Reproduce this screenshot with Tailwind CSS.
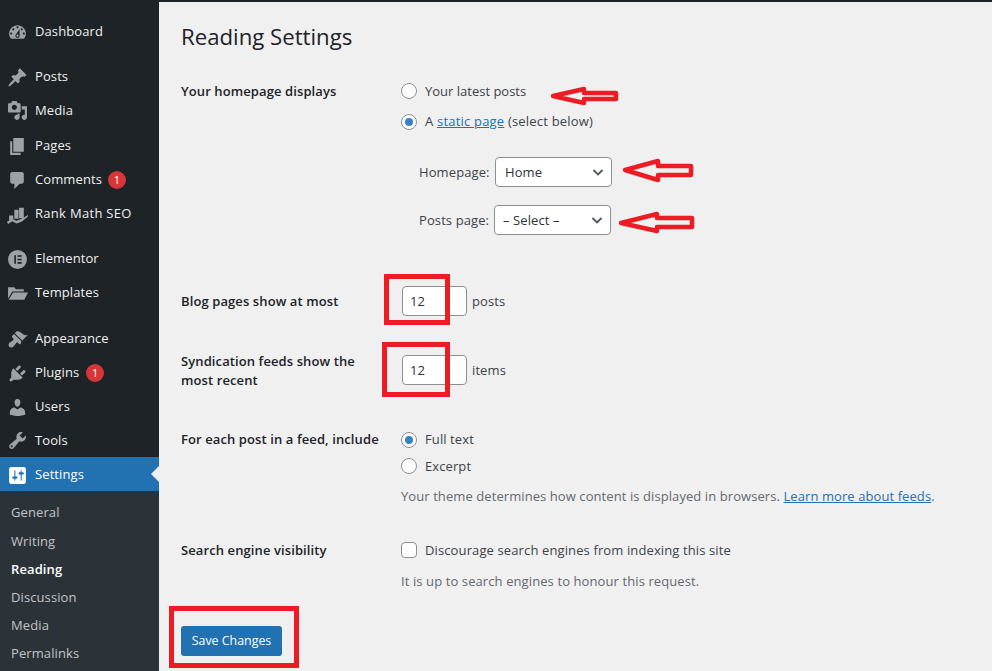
<!DOCTYPE html>
<html>
<head>
<meta charset="utf-8">
<script src="https://cdn.jsdelivr.net/npm/@tailwindcss/browser@4"></script>
</head>
<body class="bg-[#1d2327] font-['Open_Sans',sans-serif] text-[13px] tracking-[0.1px] text-[#3c434a] overflow-hidden">
<div class="relative flex h-[671px] w-[992px] overflow-hidden">
  <aside class="w-[159px] shrink-0 bg-[#1d2327] pt-[15px] text-[#f0f0f1]">
    <nav class="flex flex-col">
      <a class="flex h-[34px] items-center gap-[7px] pl-[7px]"><svg class="h-[21px] w-[21px] fill-[#9ca2a7]" viewBox="0 0 20 20"><path d="M3.76 16h12.48c1.1-1.37 1.76-3.11 1.76-5 0-4.42-3.58-8-8-8s-8 3.58-8 8c0 1.89.66 3.63 1.76 5zM10 4c.55 0 1 .45 1 1s-.45 1-1 1-1-.45-1-1 .45-1 1-1zM6 6c.55 0 1 .45 1 1s-.45 1-1 1-1-.45-1-1 .45-1 1-1zm8 0c.55 0 1 .45 1 1s-.45 1-1 1-1-.45-1-1 .45-1 1-1zm-5.37 5.55L12 7v6c0 1.1-.9 2-2 2s-2-.9-2-2c0-.57.24-1.08.63-1.45zM4 10c.55 0 1 .45 1 1s-.45 1-1 1-1-.45-1-1 .45-1 1-1zm12 0c.55 0 1 .45 1 1s-.45 1-1 1-1-.45-1-1 .45-1 1-1zm-5 3c0-.55-.45-1-1-1s-1 .45-1 1 .45 1 1 1 1-.45 1-1z"/></svg>Dashboard</a>
      <a class="mt-[11px] flex h-[34px] items-center gap-[7px] pl-[7px]"><svg class="h-[21px] w-[21px] fill-[#9ca2a7]" viewBox="0 0 20 20"><path d="M10.44 3.02l1.82-1.82 6.36 6.35-1.83 1.82c-1.05-.68-2.48-.57-3.41.36l-.75.75c-.92.93-1.04 2.35-.35 3.41l-1.83 1.82-2.41-2.41-2.8 2.79c-.42.42-3.38 2.71-3.8 2.29s1.86-3.39 2.28-3.81l2.79-2.79L4.1 9.36l1.83-1.82c1.05.69 2.48.57 3.4-.36l.75-.75c.93-.92 1.05-2.35.36-3.41z"/></svg>Posts</a>
      <a class="mb-[2px] flex h-[33px] items-center gap-[7px] pl-[7px]"><svg class="h-[21px] w-[21px] fill-[#9ca2a7]" viewBox="0 0 20 20"><path d="M13 11V4c0-.55-.45-1-1-1h-1.67L9 1H5L3.67 3H2c-.55 0-1 .45-1 1v7c0 .55.45 1 1 1h10c.55 0 1-.45 1-1zM7 4.5c1.38 0 2.5 1.12 2.5 2.5S8.38 9.5 7 9.5 4.5 8.38 4.5 7 5.62 4.5 7 4.5zM14 6h5v10.5c0 1.38-1.12 2.5-2.5 2.5S14 17.88 14 16.5s1.12-2.5 2.5-2.5c.17 0 .34.02.5.05V9h-3V6zm-4 8.05V13h2v3.5c0 1.38-1.12 2.5-2.5 2.5S7 17.88 7 16.5 8.12 14 9.5 14c.17 0 .34.02.5.05z"/></svg>Media</a>
      <a class="flex h-[34px] items-center gap-[7px] pl-[7px]"><svg class="h-[21px] w-[21px] fill-[#9ca2a7]" viewBox="0 0 20 20"><path d="M6 15V2h10v13H6zm-1 1h8v2H3V5h2v11z"/></svg>Pages</a>
      <a class="flex h-[34px] items-center gap-[7px] pl-[7px]"><svg class="h-[21px] w-[21px] fill-[#9ca2a7]" viewBox="0 0 20 20"><path d="M5 2h9c1.1 0 2 .9 2 2v7c0 1.1-.9 2-2 2h-2l-5 5v-5H5c-1.1 0-2-.9-2-2V4c0-1.1.9-2 2-2z"/></svg>Comments<span class="-ml-[1px] flex h-[18px] w-[18px] items-center justify-center rounded-full bg-[#d63638] text-[11px] text-white">1</span></a>
      <a class="flex h-[34px] items-center gap-[7px] pl-[7px]"><svg class="h-[21px] w-[21px] fill-[#9ca2a7]" viewBox="0 0 20 20"><path d="M2 11h4v5H2zM7 5.5h4V14H7zM11.5 3.5H16V13.5h-4.500zM0 17l5-3 4 2 5-2 6-3.500V12l-6 5-5 1.500-4-2-4 2.500z"/></svg><span class="tracking-[0.3px]">Rank Math SEO</span></a>
      <a class="mt-[11px] flex h-[34px] items-center gap-[7px] pl-[7px]"><svg class="h-[21px] w-[21px] fill-[#9ca2a7]" viewBox="0 0 20 20"><path fill-rule="evenodd" d="M10 1a9 9 0 1 0 0 18 9 9 0 0 0 0-18zM7 6h1.500v8H7zm3 0h4v1.500h-4zm0 3.200h4v1.500h-4zm0 3.300h4V14h-4z"/></svg>Elementor</a>
      <a class="flex h-[34px] items-center gap-[7px] pl-[7px]"><svg class="h-[21px] w-[21px] fill-[#9ca2a7]" viewBox="0 0 20 20"><path d="M1 4h6l1.500 2H16v2H5L1 15zM5.800 9H20l-3.500 7H1.600z"/></svg>Templates</a>
      <a class="mt-[12px] flex h-[34px] items-center gap-[7px] pl-[7px]"><svg class="h-[21px] w-[21px] fill-[#9ca2a7]" viewBox="0 0 20 20"><path d="M14.48 11.06L7.41 3.99l1.5-1.5c.5-.56 2.3-.47 3.51.32 1.21.8 1.43 1.28 2.91 2.1 1.18.64 2.45 1.26 4.45.85zm-.71.71L6.7 4.7 4.93 6.47c-.39.39-.39 1.02 0 1.41l1.06 1.06c.39.39.39 1.03 0 1.42-.6.6-1.43 1.11-2.21 1.69-.35.26-.7.53-1.01.84C1.43 13.71.96 15.65 2.15 16.85c1.2 1.19 3.14.72 4.38-.52.31-.31.58-.66.84-1.01.58-.78 1.09-1.61 1.69-2.21.39-.39 1.03-.39 1.42 0l1.06 1.06c.39.39 1.02.39 1.41 0z"/></svg>Appearance</a>
      <a class="flex h-[34px] items-center gap-[7px] pl-[7px]"><svg class="h-[21px] w-[21px] fill-[#9ca2a7]" viewBox="0 0 20 20"><path d="M13.11 4.36L9.87 7.6 8 5.73l3.24-3.24c.35-.34 1.05-.2 1.56.32.52.51.66 1.21.31 1.55zm-8 1.77l.91-1.12 9.01 9.01-1.19.84c-.71.71-2.63 1.16-3.82 1.16H6.14L4.9 17.26c-.59.59-1.54.59-2.12 0-.59-.58-.59-1.53 0-2.12l1.24-1.24v-3.88c0-1.13.4-3.19 1.09-3.89zm7.26 3.97l3.24-3.24c.34-.35 1.04-.21 1.55.31.52.51.66 1.21.31 1.55l-3.24 3.25z"/></svg>Plugins<span class="flex h-[18px] w-[18px] items-center justify-center rounded-full bg-[#d63638] text-[11px] text-white">1</span></a>
      <a class="flex h-[34px] items-center gap-[7px] pl-[7px]"><svg class="h-[21px] w-[21px] fill-[#9ca2a7]" viewBox="0 0 20 20"><path d="M10 9.25c-2.27 0-2.73-3.44-2.73-3.44C7 4.02 7.82 2 9.97 2c2.16 0 2.98 2.02 2.71 3.81 0 0-.41 3.44-2.68 3.44zm0 2.57L12.72 10c2.39 0 4.52 2.33 4.52 4.53v2.49s-3.65 1.13-7.24 1.13c-3.65 0-7.24-1.13-7.24-1.13v-2.49c0-2.25 1.94-4.48 4.47-4.48z"/></svg>Users</a>
      <a class="flex h-[33px] items-center gap-[7px] pl-[7px]"><svg class="h-[21px] w-[21px] fill-[#9ca2a7]" viewBox="0 0 20 20"><path d="M16.68 9.77c-1.34 1.34-3.3 1.67-4.95.99l-5.41 6.52c-.99.99-2.59.99-3.58 0s-.99-2.59 0-3.57l6.52-5.42c-.68-1.65-.35-3.61.99-4.95 1.28-1.28 3.12-1.62 4.72-1.06l-2.89 2.89 2.82 2.82 2.86-2.87c.53 1.58.18 3.39-1.08 4.65zM3.81 16.21c.4.39 1.04.39 1.43 0 .4-.4.4-1.04 0-1.43-.39-.4-1.03-.4-1.43 0-.39.39-.39 1.03 0 1.43z"/></svg>Tools</a>
      <a class="relative flex h-[34px] items-center gap-[7px] bg-[#2271b1] pt-[2px] pl-[7px] text-white"><svg class="h-[21px] w-[21px] fill-white" viewBox="0 0 20 20"><path d="M18 16V4c0-1.1-.9-2-2-2H4c-1.1 0-2 .9-2 2v12c0 1.1.9 2 2 2h12c1.1 0 2-.9 2-2zM8 11h1c.55 0 1 .45 1 1s-.45 1-1 1H8v1.5c0 .28-.22.5-.5.5s-.5-.22-.5-.5V13H6c-.55 0-1-.45-1-1s.45-1 1-1h1V5.5c0-.28.22-.5.5-.5s.5.22.5.5V11zm5-2h-1c-.55 0-1-.45-1-1s.45-1 1-1h1V5.5c0-.28.22-.5.5-.5s.5.22.5.5V7h1c.55 0 1 .45 1 1s-.45 1-1 1h-1v5.5c0 .28-.22.5-.5.5s-.5-.22-.5-.5V9z"/></svg>Settings<span class="absolute right-0 top-[9px] h-0 w-0 border-y-[8px] border-r-[8px] border-y-transparent border-r-[#f0f0f1]"></span></a>
    </nav>
    <ul class="flex h-[200px] flex-col bg-[#2c3338] pt-[7px] text-[#c3c4c7]">
      <li class="flex h-[30px] items-center pl-[11px]">General</li>
      <li class="flex h-[28px] items-center pl-[11px]">Writing</li>
      <li class="flex h-[28px] items-center pl-[11px] font-semibold text-white">Reading</li>
      <li class="flex h-[28px] items-center pl-[11px]">Discussion</li>
      <li class="flex h-[28px] items-center pl-[11px]">Media</li>
      <li class="flex h-[28px] items-center pl-[11px]">Permalinks</li>
    </ul>
  </aside>
  <main class="mt-[2px] flex-1 bg-[#f0f0f1] pl-[22px]">
    <h1 class="mt-[19px] h-[32px] text-[22.2px] leading-[32px] tracking-normal text-[#1d2327]">Reading Settings</h1>
    <section class="mt-[30px] flex">
      <h2 class="w-[220px] font-semibold leading-[16px] text-[#1d2327]">Your homepage displays</h2>
      <div>
        <label class="flex h-[16px] items-center gap-[8px]"><span class="h-[16px] w-[16px] rounded-full border border-[#8c8f94] bg-white"></span><span class="pt-[1px] tracking-normal">Your latest posts</span></label>
        <label class="mt-[15px] flex h-[16px] items-center gap-[8px]"><span class="flex h-[16px] w-[16px] items-center justify-center rounded-full border border-[#8c8f94] bg-white"><span class="h-[8px] w-[8px] rounded-full bg-[#3582c4]"></span></span><span class="tracking-[0.2px]">A <a class="text-[#2271b1] underline">static page</a> (select below)</span></label>
        <div class="mt-[27px] flex h-[30px] items-center pl-[18px]"><span class="w-[76px] pt-[1px]">Homepage:</span><div class="relative flex h-[30px] w-[117px] items-center rounded-[4px] border border-[#8c8f94] bg-white pl-[9px] pt-[1px] text-[#2c3338]">Home<svg class="absolute right-[7px] top-[10px] h-[10px] w-[12px]" viewBox="0 0 12 10"><path d="M1.5 2l4.5 4.5L10.5 2" fill="none" stroke="#50575e" stroke-width="1.8"/></svg></div></div>
        <div class="mt-[18px] flex h-[30px] items-center pl-[18px]"><span class="w-[75px] pt-[1px]">Posts page:</span><div class="relative flex h-[30px] w-[117px] items-center rounded-[4px] border border-[#8c8f94] bg-white pl-[8px] pt-[1px] text-[#2c3338]">– Select –<svg class="absolute right-[7px] top-[10px] h-[10px] w-[12px]" viewBox="0 0 12 10"><path d="M1.5 2l4.5 4.5L10.5 2" fill="none" stroke="#50575e" stroke-width="1.8"/></svg></div></div>
      </div>
    </section>
    <section class="mt-[51px] flex h-[30px] items-center">
      <h2 class="w-[221px] pt-[1px] font-semibold text-[#1d2327]">Blog pages show at most</h2>
      <input class="h-[30px] w-[65px] rounded-[4px] border border-[#8c8f94] bg-white pl-[7px] text-[#2c3338]" value="12"><span class="ml-[5px] pt-[1px]">posts</span>
    </section>
    <section class="mt-[39px] flex h-[30px] items-center">
      <h2 class="w-[221px] pt-[1px] pr-[30px] font-semibold leading-[19px] text-[#1d2327]">Syndication feeds show the most recent</h2>
      <input class="h-[30px] w-[65px] rounded-[4px] border border-[#8c8f94] bg-white pl-[7px] text-[#2c3338]" value="12"><span class="ml-[5px] pt-[1px]">items</span>
    </section>
    <section class="mt-[47px] flex">
      <h2 class="-mt-[1px] w-[220px] font-semibold leading-[16px] text-[#1d2327]">For each post in a feed, include</h2>
      <div>
        <label class="flex h-[16px] items-center gap-[8px]"><span class="flex h-[16px] w-[16px] items-center justify-center rounded-full border border-[#8c8f94] bg-white"><span class="h-[8px] w-[8px] rounded-full bg-[#3582c4]"></span></span>Full text</label>
        <label class="mt-[10px] flex h-[16px] items-center gap-[8px]"><span class="h-[16px] w-[16px] rounded-full border border-[#8c8f94] bg-white"></span><span class="pt-[1px]">Excerpt</span></label>
        <p class="mt-[13px] h-[18px] leading-[18px] tracking-[0.08px] whitespace-nowrap text-[#646970]">Your theme determines how content is displayed in browsers. <a class="text-[#2271b1] underline">Learn more about feeds</a>.</p>
      </div>
    </section>
    <section class="mt-[37px] flex">
      <h2 class="w-[220px] font-semibold leading-[16px] text-[#1d2327]">Search engine visibility</h2>
      <div>
        <label class="flex h-[16px] items-center gap-[8px]"><span class="h-[16px] w-[16px] rounded-[4px] border border-[#8c8f94] bg-white"></span><span class="pt-[1px] tracking-[0.12px]">Discourage search engines from indexing this site</span></label>
        <p class="mt-[14px] h-[18px] leading-[18px] text-[#646970]">It is up to search engines to honour this request.</p>
      </div>
    </section>
    <button class="mt-[36px] h-[30px] w-[101px] rounded-[3px] bg-[#2271b1] pt-[1px] text-[12.4px] tracking-normal text-white">Save Changes</button>
  </main>
  <div class="absolute left-[384px] top-[274px] h-[51px] w-[66px] border-[5px] border-[#ed1c24]"></div>
  <div class="absolute left-[382px] top-[342px] h-[55px] w-[68px] border-[5px] border-[#ed1c24]"></div>
  <div class="absolute left-[169px] top-[606px] h-[62px] w-[130px] border-[5px] border-[#ed1c24]"></div>
  <svg class="absolute left-0 top-0 h-[671px] w-[992px]" viewBox="0 0 992 671" fill="none" stroke="#ed1c24" stroke-width="4.5" stroke-linejoin="round">
    <polygon points="553,96 584,89 584,93 616,93 616,99 584,99 584,103"/>
    <polygon points="625,170 658,161 658,166 691,166 691,175 658,175 658,180"/>
    <polygon points="621,223 657,214 657,218 692,218 692,227 657,227 657,231"/>
  </svg>
</div>
</body>
</html>
